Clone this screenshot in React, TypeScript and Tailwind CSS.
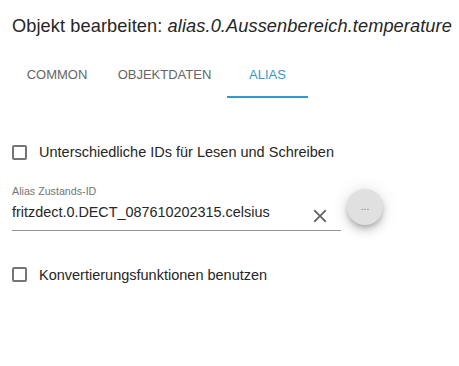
import React from "react";

function Checkbox({ label }: { label: string }) {
  return (
    <div className="flex h-[24px] items-center pl-[12px]">
      <div className="h-[15px] w-[15px] rounded-[2px] border-2 border-[#757575]" />
      <span className="ml-[12px] text-[14.5px] leading-[24px] text-[#262626]">{label}</span>
    </div>
  );
}

export default function App() {
  return (
    <div
      className="relative h-[366px] w-[459px] overflow-hidden bg-white"
      style={{ fontFamily: "'Liberation Sans', Arial, sans-serif" }}
    >
      <div className="pl-[12px] pt-[14px] text-[18.2px] leading-[24px] tracking-[0.1px] text-[#262626] whitespace-nowrap">
        Objekt bearbeiten: <i>alias.0.Aussenbereich.temperature</i>
      </div>

      <div className="mt-[12px] flex h-[48px] pl-[12px] text-[13px] uppercase leading-[16px]">
        <div className="flex w-[90px] justify-center pt-[17px] text-[#666666]">Common</div>
        <div className="flex w-[125px] justify-center pt-[17px] text-[#666666]">Objektdaten</div>
        <div className="relative flex w-[81px] justify-center pt-[17px] text-[#3399cc]">
          Alias
          <div className="absolute bottom-0 left-0 h-[2px] w-full bg-[#3399cc]" />
        </div>
      </div>

      <div className="mt-[42px]">
        <Checkbox label="Unterschiedliche IDs für Lesen und Schreiben" />
      </div>

      <div className="mt-[20px] flex items-start pl-[12px]">
        <div className="w-[329px]">
          <div className="text-[10.7px] leading-[14px] text-[#757575]">Alias Zustands-ID</div>
          <div className="mt-[2px] flex items-start border-b border-[#949494] pb-[3px]">
            <span className="flex-1 text-[14.4px] leading-[24px] text-[#262626]">
              fritzdect.0.DECT_087610202315.celsius
            </span>
            <svg
              className="mr-[10px] mt-[4.5px]"
              width="22"
              height="22"
              viewBox="0 0 24 24"
              fill="#666666"
            >
              <path d="M19 6.41 17.59 5 12 10.59 6.41 5 5 6.41 10.59 12 5 17.59 6.41 19 12 13.41 17.59 19 19 17.59 13.41 12z" />
            </svg>
          </div>
        </div>
        <div className="ml-[6px] mt-[5px] flex h-[36px] w-[36px] items-center justify-center rounded-full bg-[#e0e0e0] text-[10px] leading-none text-[#757575] shadow-[0_3px_5px_-1px_rgba(0,0,0,0.2),0_6px_10px_0_rgba(0,0,0,0.14),0_1px_18px_0_rgba(0,0,0,0.12)]">
          ...
        </div>
      </div>

      <div className="mt-[32px]">
        <Checkbox label="Konvertierungsfunktionen benutzen" />
      </div>
    </div>
  );
}
